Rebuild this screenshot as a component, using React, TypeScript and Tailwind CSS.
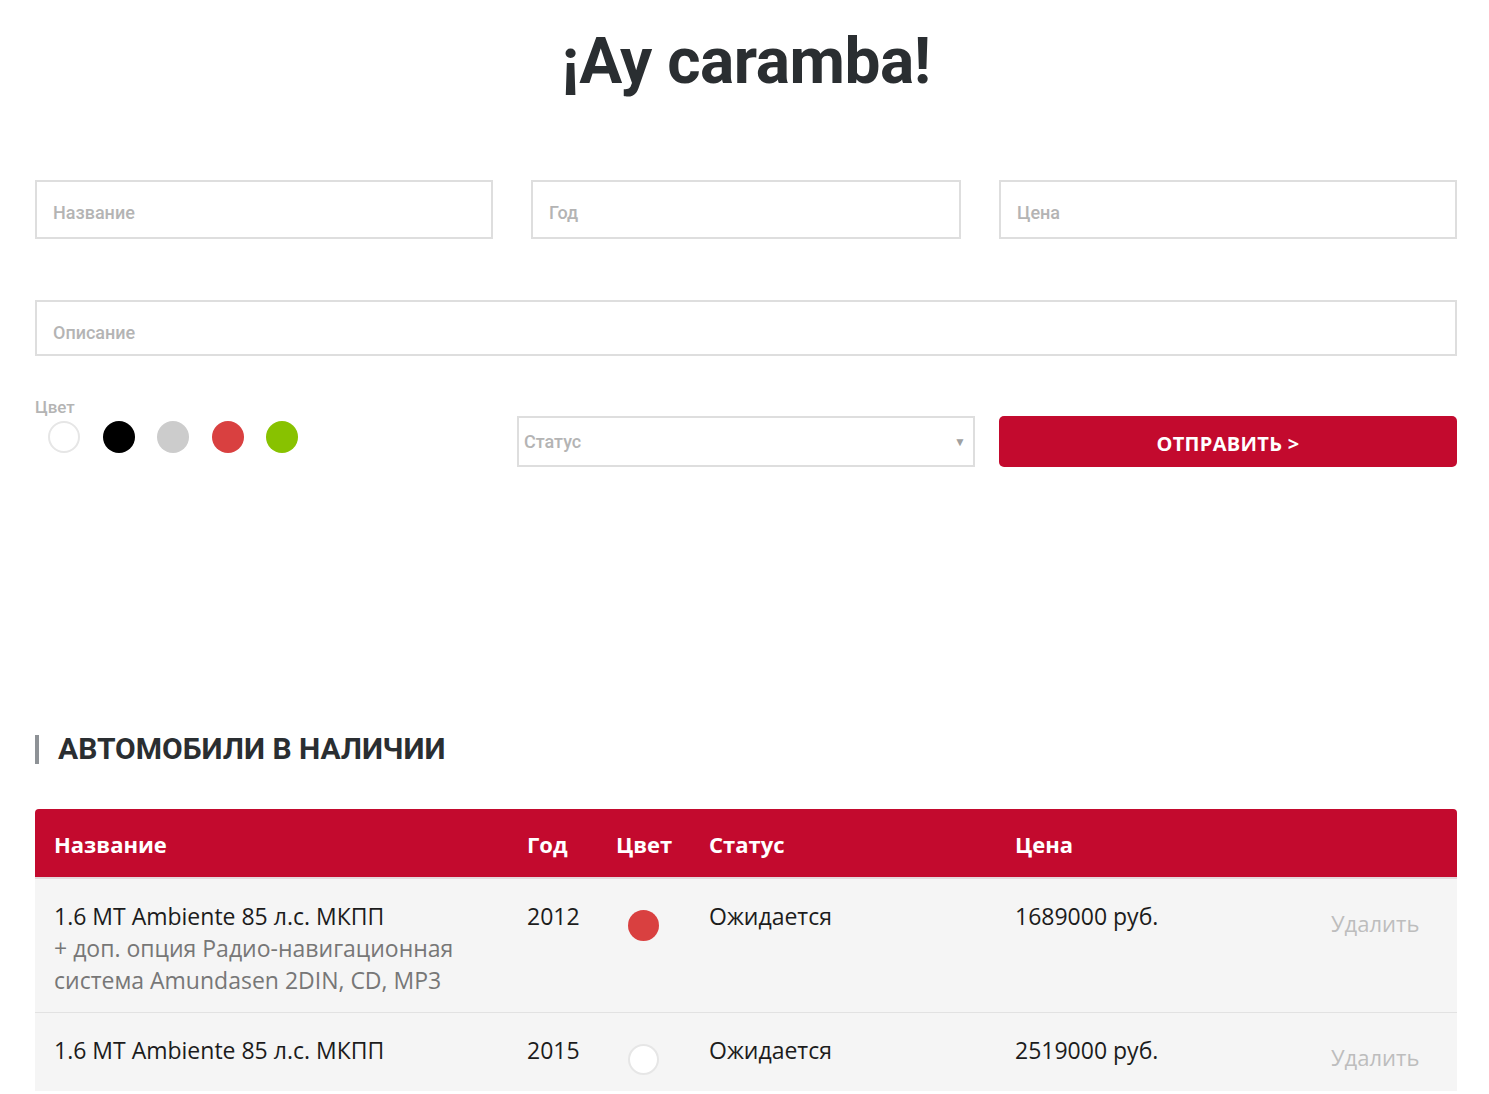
import React from 'react';

const roboto = { fontFamily: 'Roboto, "Liberation Sans", sans-serif' };
const openSans = { fontFamily: '"Open Sans", "Liberation Sans", sans-serif' };

type Car = {
  name: string;
  extra?: string;
  year: number;
  color: string;
  status: string;
  price: string;
};

const cars: Car[] = [
  {
    name: '1.6 MT Ambiente 85 л.с. МКПП',
    extra: '+ доп. опция Радио-навигационная система Amundasen 2DIN, CD, MP3',
    year: 2012,
    color: '#d94040',
    status: 'Ожидается',
    price: '1689000 руб.',
  },
  {
    name: '1.6 MT Ambiente 85 л.с. МКПП',
    year: 2015,
    color: '#ffffff',
    status: 'Ожидается',
    price: '2519000 руб.',
  },
];

const swatches = ['#ffffff', '#000000', '#cccccc', '#d94040', '#88c200'];

const cols = 'grid grid-cols-[473px_89px_93px_306px_316px_1fr]';

export default function App() {
  return (
    <div className="min-h-screen bg-white" style={roboto}>
      <div className="pb-10 pl-[35px] pr-[32px] text-[#2a2e31]">
        {/* Title */}
        <h1 className="pt-[30px] text-center text-[64px] font-bold leading-[64px] tracking-[-0.5px]">
          ¡Ay caramba!
        </h1>

        {/* Form */}
        <div className="mt-[86px] grid grid-cols-[458px_1fr_458px] gap-[38px]">
          {['Название', 'Год', 'Цена'].map((p) => (
            <div
              key={p}
              className="flex h-[59px] items-center border-2 border-[#dedede] px-4 pt-[6px] text-[18px] font-medium text-[#b4b4b4]"
            >
              {p}
            </div>
          ))}
        </div>

        <div className="mt-[61px] flex h-[56px] items-center border-2 border-[#dedede] px-4 pt-[8px] text-[18px] font-medium text-[#b4b4b4]">
          Описание
        </div>

        <div className="mt-[41px] grid grid-cols-3 gap-6">
          <div>
            <div className="text-[17px] font-medium leading-5 text-[#b4b4b4]">Цвет</div>
            <div className="mt-[4px] flex gap-[22.5px] pl-[13px]">
              {swatches.map((c) => (
                <span
                  key={c}
                  className={
                    'h-[32px] w-[32px] rounded-full ' +
                    (c === '#ffffff' ? 'border-2 border-[#e6e6e6]' : '')
                  }
                  style={{ backgroundColor: c }}
                />
              ))}
            </div>
          </div>
          <div className="mt-[19px] flex h-[51px] items-center justify-between border-2 border-[#dedede] pl-[5px] pr-[7px] text-[18px] font-medium text-[#b4b4b4]">
            <span>Статус</span>
            <span className="text-[12px] text-[#a0a0a0]">▼</span>
          </div>
          <button
            className="mt-[19px] flex h-[51px] items-center justify-center rounded-[5px] bg-[#c30a2e] pt-[4px] text-[20px] font-bold tracking-[0.3px] text-white"
            style={openSans}
          >
            ОТПРАВИТЬ &gt;
          </button>
        </div>

        {/* Cars list */}
        <div className="mt-[264px] flex items-center gap-[19px]">
          <span className="h-[29px] w-[4px] bg-[#8e9296]" />
          <h2 className="text-[30px] font-bold leading-9 text-[#2a2e31]">АВТОМОБИЛИ В НАЛИЧИИ</h2>
        </div>

        <div className="mt-[42px]" style={openSans}>
          <div className={cols + ' h-[68px] items-center rounded-t-[4px] bg-[#c30a2e] pt-[2px] text-[22px] font-bold text-white'}>
            <div className="pl-[19px]">Название</div>
            <div className="pl-[19px]">Год</div>
            <div className="pl-[19px]">Цвет</div>
            <div className="pl-[19px]">Статус</div>
            <div className="pl-[19px]">Цена</div>
            <div />
          </div>
          <div className="h-[2px] bg-[#e4d9dc]" />
          {cars.map((car, i) => (
            <div
              key={i}
              className={
                cols +
                ' bg-[#f5f5f5] pb-[16px] pt-[21px] text-[23px] leading-8 text-[#1c1c1c] ' +
                (i > 0 ? 'border-t border-[#e2e2e2]' : '')
              }
            >
              <div className="pl-[19px] pr-4">
                <div>{car.name}</div>
                {car.extra && <div className="text-[#777]">{car.extra}</div>}
              </div>
              <div className="pl-[19px]">{car.year}</div>
              <div className="flex justify-center pt-[10px]">
                <span
                  className={
                    'h-[31px] w-[31px] rounded-full ' +
                    (car.color === '#ffffff' ? 'border-2 border-[#e6e6e6]' : '')
                  }
                  style={{ backgroundColor: car.color }}
                />
              </div>
              <div className="pl-[19px]">{car.status}</div>
              <div className="pl-[19px]">{car.price}</div>
              <div className="pl-[19px] pt-[7px] text-[22px] text-[#bdbdbd]">Удалить</div>
            </div>
          ))}
        </div>
      </div>
    </div>
  );
}
